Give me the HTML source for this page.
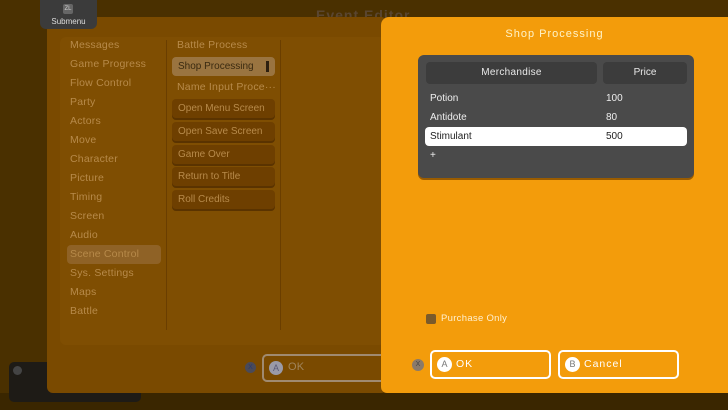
<!DOCTYPE html>
<html><head><meta charset="utf-8"><style>
*{margin:0;padding:0;box-sizing:border-box}
body{width:728px;height:410px;overflow:hidden;background:#4a3000;font-family:"Liberation Sans",sans-serif;position:relative}
.a{position:absolute}
.t{font-size:10px;color:#b78a4a;letter-spacing:.2px;white-space:nowrap}
.btn{position:absolute;left:172px;width:103px;height:19px;background:#6e3f00;border-radius:4px;box-shadow:0 2px 0 #5a3300;font-size:10px;color:#b78a4a;padding:0 6px;line-height:19px;white-space:nowrap}
</style></head><body>
<div class="a" style="left:0;top:393px;width:728px;height:17px;background:#3a2600"></div>
<div class="a" style="left:9px;top:362px;width:132px;height:40px;background:#1e1b16;border-radius:5px"></div>
<div class="a" style="left:13px;top:366px;width:9px;height:9px;border-radius:50%;background:#444"></div>
<div class="a" style="left:316px;top:7px;font-size:14px;font-weight:bold;color:#5a4630;letter-spacing:1px">Event Editor</div>
<div class="a" style="left:47px;top:17px;width:340px;height:376px;background:#7a4a00;border-radius:6px"></div>
<div class="a" style="left:40px;top:0;width:57px;height:29px;background:#3b3b3b;border-radius:0 0 6px 6px;text-align:center;color:#ddd;font-size:8px;padding-top:17px;z-index:5">Submenu</div>
<div class="a" style="left:63px;top:4px;width:10px;height:10px;background:#666;border-radius:2px;font-size:6px;color:#ccc;text-align:center;line-height:10px;z-index:6">ZL</div>
<div class="a" style="left:60px;top:37px;width:325px;height:308px;background:#7f4e02;border-radius:6px"></div>
<div class="a" style="left:166px;top:40px;width:1px;height:290px;background:#6a3e00"></div>
<div class="a" style="left:280px;top:40px;width:1px;height:290px;background:#6a3e00"></div>
<div class="a" style="left:67px;top:245px;width:94px;height:19px;background:#8f6226;border-radius:4px"></div>
<div class="a t" style="left:70px;top:36px;line-height:19px;font-size:10.5px">Messages<br>Game Progress<br>Flow Control<br>Party<br>Actors<br>Move<br>Character<br>Picture<br>Timing<br>Screen<br>Audio<br>Scene Control<br>Sys. Settings<br>Maps<br>Battle</div>
<div class="a t" style="left:177px;top:39px;font-size:10.5px">Battle Process</div>
<div class="a" style="left:172px;top:57px;width:103px;height:19px;background:#9a7440;border-radius:4px;font-size:10px;color:#3a2a10;padding:0 6px;line-height:19px">Shop Processing<span style="position:absolute;right:6px;top:4px;width:3px;height:11px;background:#2e2010"></span></div>
<div class="a t" style="left:177px;top:81px;font-size:10.5px">Name Input Proce···</div>
<div class="btn" style="top:99px">Open Menu Screen</div>
<div class="btn" style="top:122px">Open Save Screen</div>
<div class="btn" style="top:145px">Game Over</div>
<div class="btn" style="top:167px">Return to Title</div>
<div class="btn" style="top:190px">Roll Credits</div>
<div class="a" style="left:245px;top:362px;width:11px;height:11px;border-radius:50%;background:#4a4a58;font-size:7px;color:#2a3a70;text-align:center;line-height:11px">X</div>
<div class="a" style="left:262px;top:354px;width:125px;height:28px;border:2px solid #a08a70;border-radius:5px"></div>
<div class="a" style="left:269px;top:361px;width:14px;height:14px;border-radius:50%;background:#9a9aa8;font-size:9px;color:#5a5a78;text-align:center;line-height:14px">A</div>
<div class="a t" style="left:288px;top:361px;color:#a0845a;font-size:11px">OK</div>

<div class="a" style="left:381px;top:17px;width:347px;height:376px;background:#f39c0b;border-radius:8px 0 0 6px"></div>
<div class="a" style="left:381px;top:28px;width:347px;text-align:center;font-size:11px;color:#fff3c8;letter-spacing:1px">Shop Processing</div>
<div class="a" style="left:418px;top:55px;width:276px;height:123px;background:#4a4a4a;border-radius:6px;box-shadow:0 2px 0 #9a5c00"></div>
<div class="a" style="left:426px;top:62px;width:171px;height:22px;background:#3c3c3c;border-radius:4px;color:#e8e8e8;font-size:10px;text-align:center;line-height:22px;letter-spacing:.3px">Merchandise</div>
<div class="a" style="left:603px;top:62px;width:84px;height:22px;background:#3c3c3c;border-radius:4px;color:#e8e8e8;font-size:10px;text-align:center;line-height:22px">Price</div>
<div class="a" style="left:425px;top:127px;width:262px;height:19px;background:#fff;border-radius:4px"></div>
<div class="a" style="left:430px;top:89px;font-size:10px;color:#eee;line-height:19px">Potion<br>Antidote<br><span style="color:#222">Stimulant</span><br>+</div>
<div class="a" style="left:606px;top:89px;font-size:10px;color:#eee;line-height:19px">100<br>80<br><span style="color:#222">500</span></div>
<div class="a" style="left:426px;top:314px;width:10px;height:10px;background:#7a5a2a;border-radius:2px"></div>
<div class="a" style="left:441px;top:313px;font-size:9.5px;color:#fff0d0;letter-spacing:.3px">Purchase Only</div>
<div class="a" style="left:412px;top:359px;width:12px;height:12px;border-radius:50%;background:#8a7a6a;font-size:7px;color:#444;text-align:center;line-height:12px">X</div>
<div class="a" style="left:430px;top:350px;width:121px;height:29px;border:2px solid #fff;border-radius:5px"></div>
<div class="a" style="left:437px;top:357px;width:15px;height:15px;border-radius:50%;background:#fff;font-size:9px;color:#777;text-align:center;line-height:15px">A</div>
<div class="a" style="left:456px;top:358px;font-size:10.5px;color:#fff;letter-spacing:1px;line-height:13px">OK</div>
<div class="a" style="left:558px;top:350px;width:121px;height:29px;border:2px solid #fff;border-radius:5px"></div>
<div class="a" style="left:565px;top:357px;width:15px;height:15px;border-radius:50%;background:#fff;font-size:9px;color:#777;text-align:center;line-height:15px">B</div>
<div class="a" style="left:584px;top:358px;font-size:10.5px;color:#fff;letter-spacing:1px;line-height:13px">Cancel</div>
</body></html>
